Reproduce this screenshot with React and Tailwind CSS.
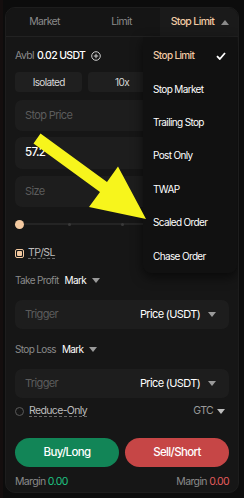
import React from "react";

const Caret = ({ className = "" }) => (
  <svg width="8" height="5" viewBox="0 0 8 5" className={className}>
    <path d="M0 0 L8 0 L4 5 Z" fill="currentColor" />
  </svg>
);

export default function App() {
  return (
    <div className="w-[244px] h-[498px] bg-[#0c0c0c] relative overflow-hidden tracking-[-0.04em]" style={{ fontFamily: "Inter, 'Noto Sans', sans-serif" }}>
      <div className="absolute left-0 top-0 w-[3px] h-full bg-[#140e0e]" />
      <div className="ml-[5px] pt-[7px] w-[234px]">
        <div className="w-[234px] h-[486px] rounded-[10px] bg-[#161616] border border-[#1d1d1d] overflow-hidden flex flex-col relative">
          {/* Tabs */}
          <div className="grid grid-cols-[77px_77px_80px] h-[29px] border-b border-[#222] bg-[#151515] text-[10.5px]">
            <div className="flex items-center justify-center text-[#8a8a8a]">Market</div>
            <div className="flex items-center justify-center text-[#8a8a8a]">Limit</div>
            <div className="flex items-center justify-center gap-[7px] bg-[#1a1a1a] text-[#f1caa4] font-medium">
              <span>Stop Limit</span>
              <svg width="8" height="5" viewBox="0 0 8 5" className="text-[#8a8a8a]"><path d="M0 5 L8 5 L4 0 Z" fill="currentColor" /></svg>
            </div>
          </div>

          <div className="px-[9px] flex flex-col">
            {/* Avbl */}
            <div className="h-[13px] mt-[12px] flex items-center gap-[3px] text-[10.5px]">
              <span className="text-[#8a8a8a]">Avbl</span>
              <span className="text-white font-medium">0.02 USDT</span>
              <svg width="10" height="10" viewBox="0 0 10 10" className="ml-[3px] text-[#cfcfcf]">
                <circle cx="5" cy="5" r="4.3" fill="none" stroke="currentColor" strokeWidth="1" />
                <path d="M5 2.8 V7.2 M2.8 5 H7.2" stroke="currentColor" strokeWidth="1" />
              </svg>
            </div>

            {/* Margin mode */}
            <div className="mt-[10px] grid grid-cols-3 gap-[6px] text-[10px] text-[#d8d8d8]">
              <div className="h-[20px] rounded-[4px] bg-[#1f1f1f] flex items-center justify-center">Isolated</div>
              <div className="h-[20px] rounded-[4px] bg-[#1f1f1f] flex items-center justify-center">10x</div>
              <div className="h-[20px] rounded-[4px] bg-[#1f1f1f]" />
            </div>

            {/* Inputs */}
            <div className="mt-[8px] h-[31px] rounded-[7px] bg-[#1d1d1d] flex items-center px-[10px] text-[11px] text-[#5c5c5c]">Stop Price</div>
            <div className="mt-[6px] h-[32px] rounded-[7px] bg-[#1d1d1d] flex items-center px-[10px] text-[11.5px] text-white font-medium">57.2</div>
            <div className="mt-[7px] h-[31px] rounded-[7px] bg-[#1d1d1d] flex items-center px-[10px] text-[11px] text-[#5c5c5c]">Size</div>

            {/* Slider */}
            <div className="mt-[12px] h-[10px] relative flex items-center">
              <div className="absolute left-[4px] right-[4px] h-[2px] bg-[#242424]" />
              <div className="absolute left-[53px] w-[3px] h-[3px] rounded-full bg-[#3a3a3a]" />
              <div className="absolute left-[106px] w-[3px] h-[3px] rounded-full bg-[#3a3a3a]" />
              <div className="absolute left-[159px] w-[3px] h-[3px] rounded-full bg-[#3a3a3a]" />
              <div className="absolute right-[2px] w-[3px] h-[3px] rounded-full bg-[#3a3a3a]" />
              <div className="relative w-[9px] h-[9px] rounded-full bg-[#f3c9a0]" />
            </div>

            {/* TP/SL */}
            <div className="mt-[18px] h-[12px] flex items-center gap-[4px] text-[10.5px]">
              <div className="w-[9px] h-[9px] rounded-[2px] border border-[#f3c9a0] flex items-center justify-center">
                <div className="w-[5px] h-[5px] rounded-[1px] bg-[#f3c9a0]" />
              </div>
              <span className="text-[#bdbdbd] border-b border-dashed border-[#6a6a6a] leading-[11px]">TP/SL</span>
            </div>

            {/* Take Profit */}
            <div className="mt-[15px] h-[12px] flex items-center gap-[6px] text-[10px]">
              <span className="text-[#8a8a8a]">Take Profit</span>
              <span className="text-white">Mark</span>
              <Caret className="text-[#9a9a9a]" />
            </div>
            <div className="mt-[14px] h-[29px] rounded-[7px] bg-[#1d1d1d] flex items-center justify-between pl-[10px] pr-[13px] text-[11px]">
              <span className="text-[#5c5c5c]">Trigger</span>
              <span className="flex items-center gap-[8px] text-white">Price (USDT)<Caret className="text-[#9a9a9a]" /></span>
            </div>

            {/* Stop Loss */}
            <div className="mt-[14px] h-[12px] flex items-center gap-[6px] text-[10px]">
              <span className="text-[#8a8a8a]">Stop Loss</span>
              <span className="text-white">Mark</span>
              <Caret className="text-[#9a9a9a]" />
            </div>
            <div className="mt-[14px] h-[29px] rounded-[7px] bg-[#1d1d1d] flex items-center justify-between pl-[10px] pr-[13px] text-[11px]">
              <span className="text-[#5c5c5c]">Trigger</span>
              <span className="flex items-center gap-[8px] text-white">Price (USDT)<Caret className="text-[#9a9a9a]" /></span>
            </div>

            {/* Reduce only */}
            <div className="mt-[7px] h-[12px] flex items-center justify-between text-[10.5px]">
              <div className="flex items-center gap-[5px]">
                <div className="w-[9px] h-[9px] rounded-full border border-[#5a5a5a]" />
                <span className="text-[#bdbdbd] border-b border-dashed border-[#6a6a6a] leading-[11px]">Reduce-Only</span>
              </div>
              <span className="flex items-center gap-[4px] text-[#9a9a9a] pr-[4px]">GTC<Caret className="text-[#bdbdbd]" /></span>
            </div>

            {/* Buttons */}
            <div className="mt-[21px] grid grid-cols-2 gap-[6px] text-[11.5px] font-medium text-white">
              <div className="h-[29px] rounded-full bg-[#128557] flex items-center justify-center">Buy/Long</div>
              <div className="h-[29px] rounded-full bg-[#c64646] flex items-center justify-center">Sell/Short</div>
            </div>

            {/* Margin */}
            <div className="mt-[9px] h-[12px] flex items-center justify-between text-[10.5px]">
              <span className="text-[#8a8a8a]">Margin <span className="text-[#1fc282]">0.00</span></span>
              <span className="text-[#8a8a8a]">Margin <span className="text-[#e25c5c]">0.00</span></span>
            </div>
          </div>

          {/* Dropdown */}
          <div className="absolute left-[137px] top-[29px] w-[94px] h-[236px] bg-[#111111] rounded-b-[8px] shadow-[0_4px_12px_rgba(0,0,0,0.6)] flex flex-col pt-[2px] text-[10px] text-white">
            <div className="h-[33.5px] flex items-center justify-between pl-[10px] pr-[11px]">
              <span className="text-[#f1caa4] font-medium">Stop Limit</span>
              <svg width="10" height="8" viewBox="0 0 10 8"><path d="M1 4.2 L3.8 7 L9 1" fill="none" stroke="white" strokeWidth="1.8" /></svg>
            </div>
            <div className="h-[33.5px] flex items-center pl-[10px]">Stop Market</div>
            <div className="h-[33.5px] flex items-center pl-[10px]">Trailing Stop</div>
            <div className="h-[33.5px] flex items-center pl-[10px]">Post Only</div>
            <div className="h-[33.5px] flex items-center pl-[10px]">TWAP</div>
            <div className="h-[33.5px] flex items-center pl-[10px]">Scaled Order</div>
            <div className="h-[33.5px] flex items-center pl-[10px]">Chase Order</div>
          </div>
        </div>
      </div>

      {/* Arrow annotation */}
      <svg className="absolute left-0 top-0 pointer-events-none" width="244" height="498" viewBox="0 0 244 498">
        <polygon points="40.5,133.5 107,182 118,166.5 146,219 89,207 100,192 33.5,143.5" fill="#f7f51c" />
      </svg>
    </div>
  );
}
